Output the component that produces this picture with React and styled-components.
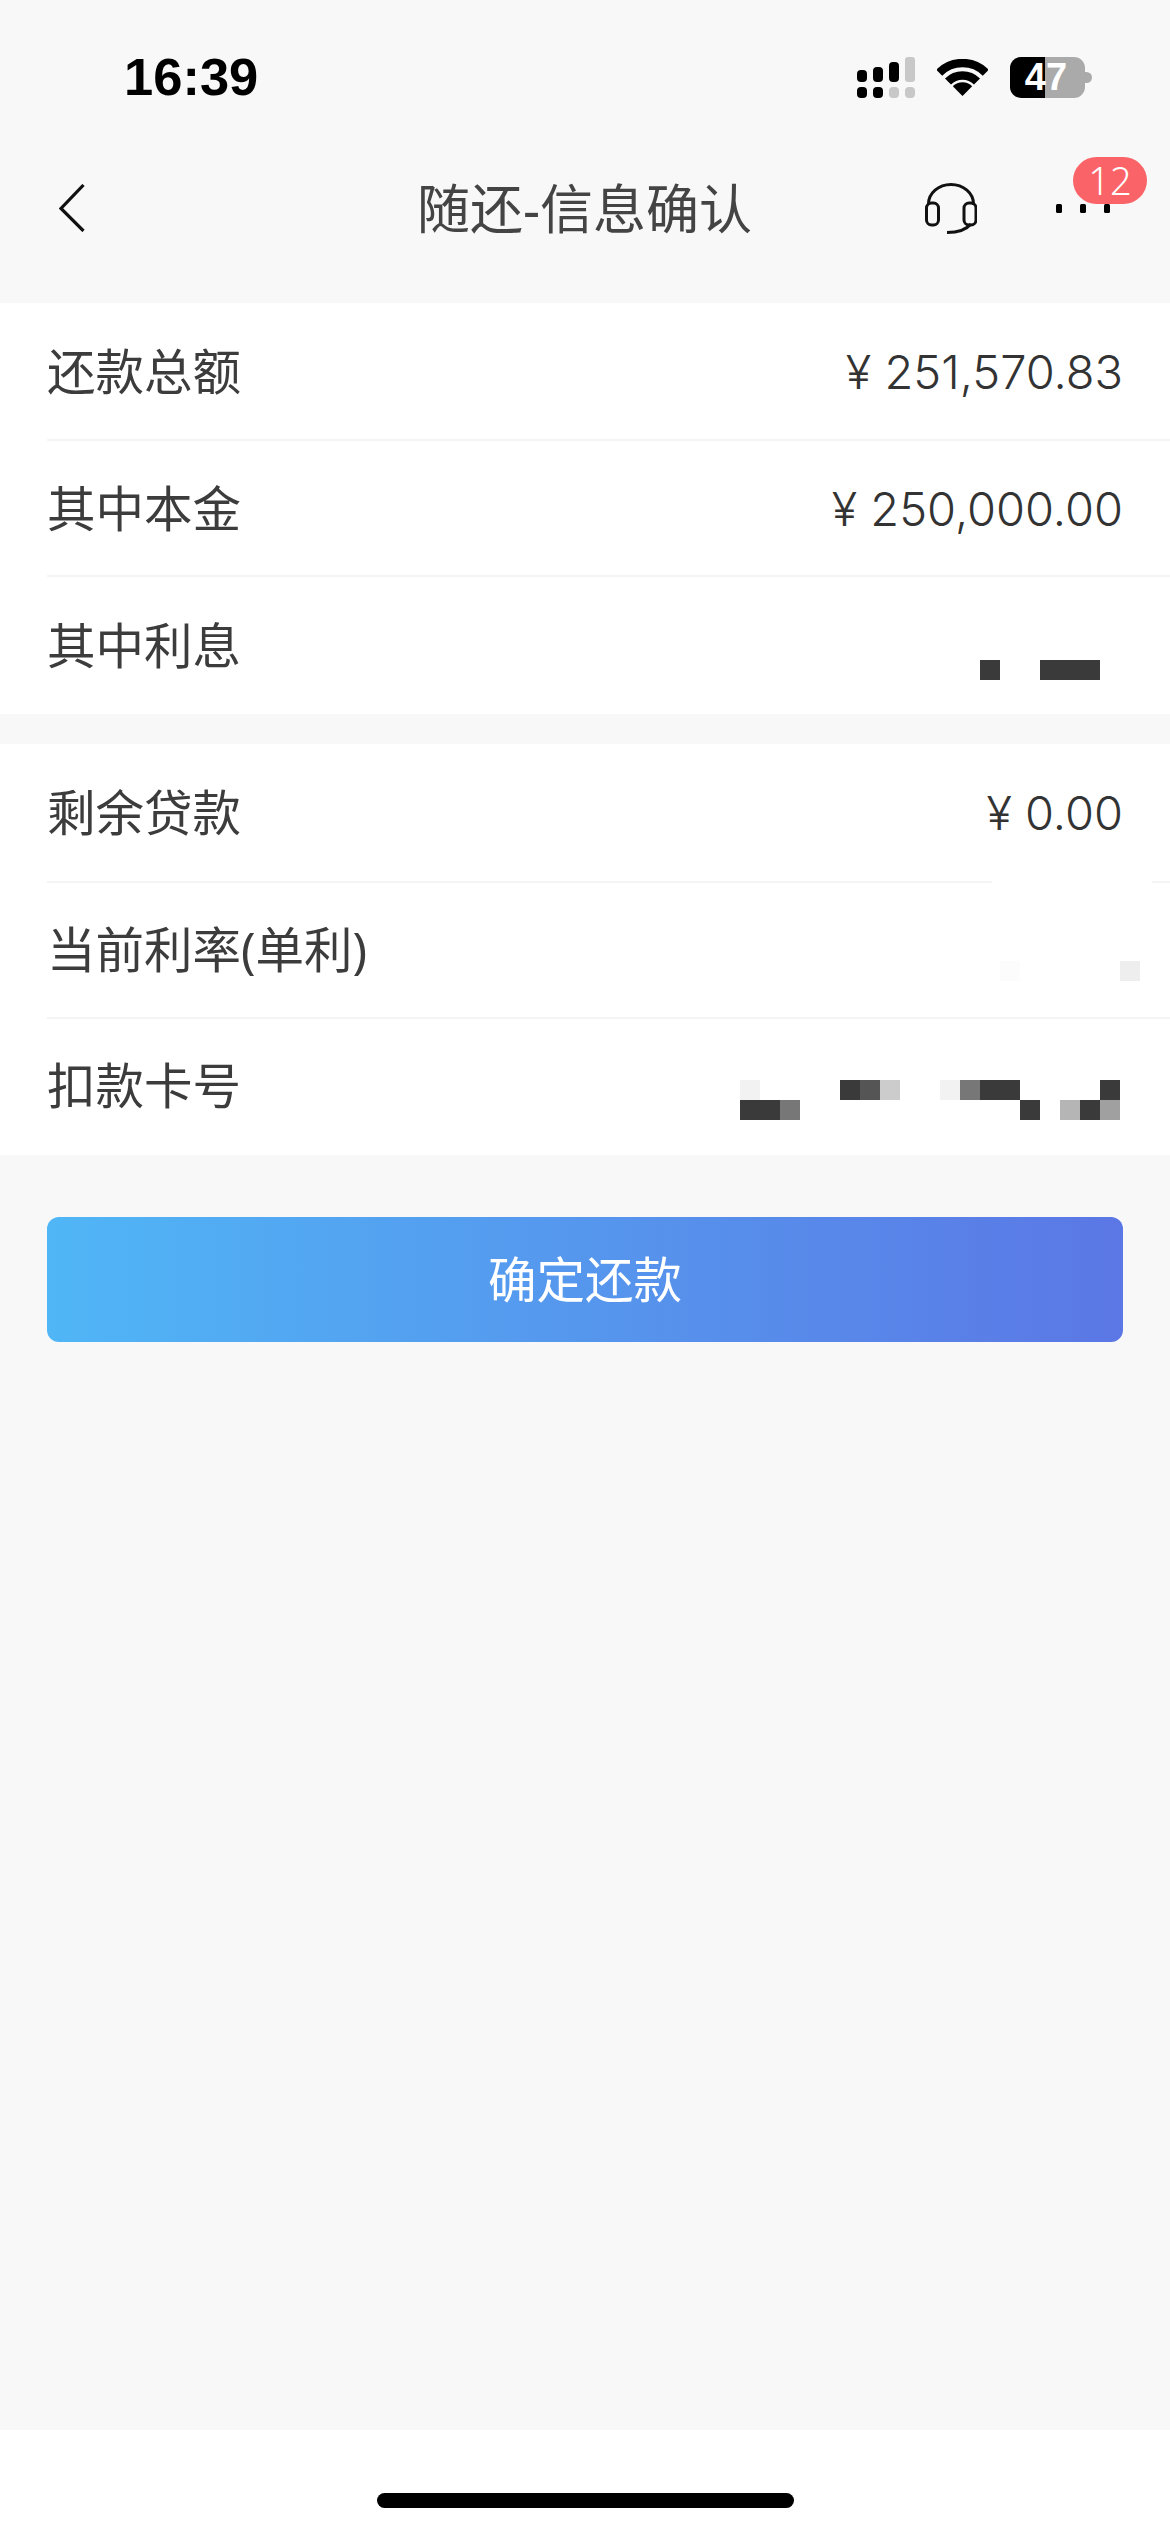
import React from "react";
import styled, { createGlobalStyle } from "styled-components";

const Global = createGlobalStyle`
  html, body { margin: 0; padding: 0; background: #f8f8f8; }
  * { box-sizing: border-box; }
`;

const CJK = `"Noto Sans", "Noto Sans CJK SC", sans-serif`;

const Page = styled.div`
  width: 1170px;
  height: 2532px;
  display: flex;
  flex-direction: column;
  background: #f8f8f8;
  font-family: ${CJK};
  overflow: hidden;
`;
const StatusBar = styled.div`
  height: 154px;
  display: flex;
  align-items: center;
  justify-content: space-between;
  padding: 0 78px 0 124px;
`;
const Time = styled.div`
  font-family: "Liberation Sans", sans-serif;
  font-weight: 700;
  font-size: 52.5px;
  line-height: 1;
  color: #000;
`;
const StatusIcons = styled.div`
  display: flex;
  align-items: center;
`;
const Battery = styled.div`
  position: relative;
  width: 75px;
  height: 41px;
  margin: 0 7px 0 22px;
  border-radius: 11px;
  background: linear-gradient(90deg, #000 0 35px, #aaaaaa 35px 100%);
  color: #fff;
  font-family: "Liberation Sans", sans-serif;
  font-weight: 700;
  font-size: 38px;
  line-height: 41px;
  text-align: center;
  padding-right: 3px;
  &::after {
    content: "";
    position: absolute;
    left: 75px;
    top: 15px;
    width: 7px;
    height: 11px;
    border-radius: 0 6px 6px 0;
    background: #aaaaaa;
  }
`;
const Nav = styled.div`
  height: 108px;
  margin-bottom: 41px;
  display: grid;
  grid-template-columns: 1fr auto 1fr;
  align-items: center;
  padding: 0 60px 0 59px;
`;
const BackSlot = styled.div`
  display: flex;
  align-items: center;
`;
const Title = styled.div`
  font-size: 53px;
  line-height: 1;
  font-weight: 400;
  color: #444;
`;
const NavActions = styled.div`
  display: flex;
  align-items: center;
  justify-content: flex-end;
  gap: 79px;
`;
const More = styled.div`
  position: relative;
  width: 54px;
  height: 9px;
  display: flex;
  justify-content: space-between;
`;
const Dot = styled.span`
  width: 6px;
  height: 9px;
  border-radius: 1.5px;
  background: #000;
`;
const Badge = styled.div`
  position: absolute;
  left: 17px;
  top: -47px;
  width: 74px;
  height: 47px;
  border-radius: 24px;
  background: #fa6367;
  color: #fff;
  font-size: 38px;
  font-weight: 300;
  line-height: 47px;
  text-align: center;
`;
const Section = styled.div`
  background: #fff;
  margin-bottom: ${(p) => p.$mb || 0}px;
`;
const Row = styled.div`
  height: ${(p) => p.$h}px;
  margin-left: 47px;
  padding: 0 47px ${(p) => p.$lift || 0}px 0;
  display: flex;
  align-items: center;
  justify-content: space-between;
  border-bottom: ${(p) => (p.$last ? "none" : "2px solid #f4f4f4")};
  ${(p) =>
    p.$gap
      ? `border-image: linear-gradient(90deg, #f4f4f4 0 945px, #fff 945px 1105px, #f4f4f4 1105px) 0 0 2 0;`
      : ""}
`;
const Label = styled.div`
  font-size: 48.5px;
  line-height: 1;
  font-weight: 400;
  color: #3c3c3c;
`;
const Value = styled.div`
  font-family: Inter, "Noto Sans", sans-serif;
  font-size: 47px;
  line-height: 1;
  font-weight: 350;
  color: #333;
`;
const Mosaic = styled.svg`
  display: block;
  align-self: flex-start;
  margin-top: ${(p) => p.$top}px;
  margin-right: ${(p) => p.$right}px;
  shape-rendering: crispEdges;
`;
const PrimaryButton = styled.button`
  display: block;
  width: 1076px;
  height: 125px;
  margin: 0 47px;
  padding: 0 0 6px;
  border: 0;
  border-radius: 12px;
  background: linear-gradient(90deg, #50b6f6 0%, #5b77e5 100%);
  color: #fff;
  font-family: ${CJK};
  font-size: 48.5px;
  font-weight: 400;
`;
const Spacer = styled.div`
  flex: 1;
`;
const HomeBar = styled.div`
  height: 102px;
  background: #fff;
  display: flex;
  justify-content: center;
  padding-top: 63px;
`;
const Indicator = styled.div`
  width: 417px;
  height: 15px;
  border-radius: 8px;
  background: #000;
`;

const Signal = () => (
  <svg width="58" height="41" viewBox="0 0 58 41">
    <g fill="#000">
      <rect x="0" y="13" width="10" height="12" rx="4" />
      <rect x="16" y="10" width="10" height="15" rx="4" />
      <rect x="32" y="5" width="10" height="20" rx="4" />
      <rect x="0" y="30" width="10" height="11" rx="4" />
      <rect x="16" y="30" width="10" height="11" rx="4" />
    </g>
    <g fill="#c8c8c8">
      <rect x="48" y="0" width="10" height="25" rx="3" />
      <rect x="32" y="30" width="10" height="11" rx="4" />
      <rect x="48" y="30" width="10" height="11" rx="4" />
    </g>
  </svg>
);

const WifiIcon = styled.svg`
  margin-left: 22px;
`;

const Wifi = () => (
  <WifiIcon width="51" height="37" viewBox="0 0 51 37">
    <g fill="none" stroke="#000" strokeWidth="8.5">
      <path d="M2.2 13.7A33 33 0 0 1 48.8 13.7" />
      <path d="M11 22.5A20.5 20.5 0 0 1 40 22.5" />
    </g>
    <path d="M25.5 37L15.8 27.3A13.7 13.7 0 0 1 35.2 27.3Z" fill="#000" />
  </WifiIcon>
);

const Back = () => (
  <svg width="26" height="48" viewBox="0 0 26 48">
    <path d="M24.5 1L2 24.5L24.5 47" fill="none" stroke="#111" strokeWidth="3.2" />
  </svg>
);

const Headset = () => (
  <svg width="52" height="51" viewBox="0 0 52 51" fill="none" stroke="#111" strokeWidth="3">
    <path d="M3.5 22V21A22.5 19.5 0 0 1 48.5 21V22" />
    <rect x="1.5" y="20" width="12" height="22" rx="5" />
    <rect x="39" y="20" width="12" height="22" rx="5" />
    <path d="M22 49.5C32 49.5 41 47 46 41" />
  </svg>
);

const cells3 = [
  [0, 0, 20, "#3a3a3a"],
  [60, 0, 60, "#3a3a3a"],
];
const cells5 = [
  [0, 0, 20, "#fcfcfc"],
  [120, 0, 20, "#eeeeee"],
];
const cells6 = [
  [0, 0, 20, "#f2f2f2"],
  [100, 0, 20, "#3a3a3a"],
  [120, 0, 20, "#555555"],
  [140, 0, 20, "#cccccc"],
  [200, 0, 20, "#f2f2f2"],
  [220, 0, 20, "#777777"],
  [240, 0, 40, "#3a3a3a"],
  [360, 0, 20, "#3a3a3a"],
  [0, 20, 40, "#3a3a3a"],
  [40, 20, 20, "#777777"],
  [280, 20, 20, "#3a3a3a"],
  [320, 20, 20, "#b5b5b5"],
  [340, 20, 20, "#3a3a3a"],
  [360, 20, 20, "#a0a0a0"],
];

const Pixels = ({ w, h, top, cells, right }) => (
  <Mosaic $top={top} $right={right} width={w} height={h} viewBox={`0 0 ${w} ${h}`}>
    {cells.map(([x, y, cw, c], i) => (
      <rect key={i} x={x} y={y} width={cw} height="20" fill={c} />
    ))}
  </Mosaic>
);

export default function App() {
  return (
    <Page>
      <Global />
      <StatusBar>
        <Time>16:39</Time>
        <StatusIcons>
          <Signal />
          <Wifi />
          <Battery>47</Battery>
        </StatusIcons>
      </StatusBar>
      <Nav>
        <BackSlot><Back /></BackSlot>
        <Title>随还-信息确认</Title>
        <NavActions>
          <Headset />
          <More>
            <Dot />
            <Dot />
            <Dot />
            <Badge>12</Badge>
          </More>
        </NavActions>
      </Nav>
      <Section $mb={30}>
        <Row $h={138}>
          <Label>还款总额</Label>
          <Value>¥ 251,570.83</Value>
        </Row>
        <Row $h={136}>
          <Label>其中本金</Label>
          <Value>¥ 250,000.00</Value>
        </Row>
        <Row $h={137} $last>
          <Label>其中利息</Label>
          <Pixels w={120} h={20} top={83} cells={cells3} right={23} />
        </Row>
      </Section>
      <Section $mb={62}>
        <Row $h={139} $gap>
          <Label>剩余贷款</Label>
          <Value>¥ 0.00</Value>
        </Row>
        <Row $h={136} $lift={2}>
          <Label>当前利率(单利)</Label>
          <Pixels w={140} h={20} top={78} cells={cells5} right={-17} />
        </Row>
        <Row $h={136} $last $lift={4}>
          <Label>扣款卡号</Label>
          <Pixels w={380} h={40} top={61} cells={cells6} right={3} />
        </Row>
      </Section>
      <PrimaryButton>确定还款</PrimaryButton>
      <Spacer />
      <HomeBar>
        <Indicator />
      </HomeBar>
    </Page>
  );
}
